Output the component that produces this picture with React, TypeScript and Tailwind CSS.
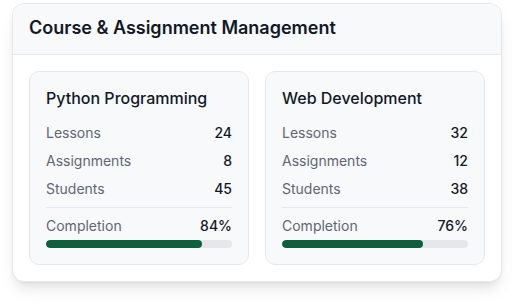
import React from "react";

const courses = [
  { name: "Python Programming", lessons: 24, assignments: 8, students: 45, completion: 84 },
  { name: "Web Development", lessons: 32, assignments: 12, students: 38, completion: 76 },
];

function Row({ label, value }: { label: string; value: React.ReactNode }) {
  return (
    <div className="flex items-center justify-between h-[28px] text-[14px] leading-[20px]">
      <span className="text-[#5f6673]">{label}</span>
      <span className="text-[#111827] font-medium">{value}</span>
    </div>
  );
}

export default function App() {
  return (
    <div
      className="w-[515px] h-[304px] bg-white pt-[3px] pl-[12px]"
      style={{ fontFamily: "Inter, 'Noto Sans', sans-serif" }}
    >
      <div className="w-[490px] rounded-xl border border-[#e5e7eb] bg-white shadow-lg overflow-hidden">
        <div className="h-[51px] border-b border-[#e5e7eb] bg-[#f8f9fb] px-4 flex items-center">
          <h2 className="text-[18px] leading-[28px] font-semibold text-[#111827] pb-[2px]">
            Course &amp; Assignment Management
          </h2>
        </div>
        <div className="p-4 grid grid-cols-2 gap-4">
          {courses.map((c) => (
            <div key={c.name} className="rounded-[10px] border border-[#e5e7eb] bg-[#f8f9fb] px-4 pt-4 pb-4">
              <h3 className="text-[16px] leading-[20px] font-medium text-[#111827] mb-[11px]">{c.name}</h3>
              <Row label="Lessons" value={c.lessons} />
              <Row label="Assignments" value={c.assignments} />
              <Row label="Students" value={c.students} />
              <div className="mt-1 border-t border-[#e5e7eb] pt-[8px]">
                <div className="flex items-center justify-between text-[14px] leading-[20px]">
                  <span className="text-[#5f6673]">Completion</span>
                  <span className="text-[#111827] font-medium">{c.completion}%</span>
                </div>
                <div className="mt-1 h-2 rounded-full bg-[#e5e7eb] overflow-hidden">
                  <div className="h-full rounded-full bg-[#0f5f3f]" style={{ width: `${c.completion}%` }} />
                </div>
              </div>
            </div>
          ))}
        </div>
      </div>
    </div>
  );
}
